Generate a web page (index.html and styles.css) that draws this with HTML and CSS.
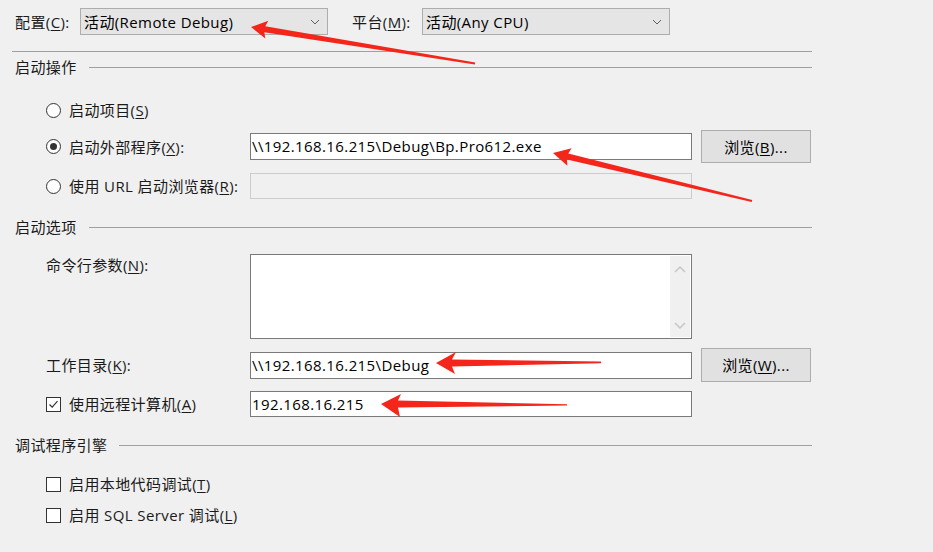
FILE: index.html
```html
<!DOCTYPE html>
<html lang="zh-CN">
<head>
<meta charset="utf-8">
<title>调试</title>
<link rel="stylesheet" href="styles.css">
</head>
<body>
<div class="page">
  <div class="toprow">
    <span class="toplab">配置(<u>C</u>):</span>
    <div class="combo"><span>活动(Remote Debug)</span><svg class="chev" width="10" height="6" viewBox="0 0 10 6"><path d="M1 1 L5 5 L9 1" fill="none" stroke="#606060" stroke-width="1"/></svg></div>
    <span class="toplab lab2">平台(<u>M</u>):</span>
    <div class="combo"><span>活动(Any CPU)</span><svg class="chev" width="10" height="6" viewBox="0 0 10 6"><path d="M1 1 L5 5 L9 1" fill="none" stroke="#606060" stroke-width="1"/></svg></div>
  </div>
  <div class="sep"></div>

  <div class="ghead g1"><span>启动操作</span><i class="gline"></i></div>

  <div class="row r-radio1">
    <span class="radio"></span><span class="optlab">启动项目(<u>S</u>)</span>
  </div>
  <div class="row r-radio2">
    <span class="radio on"></span><span class="optlab w-rad">启动外部程序(<u>X</u>):</span>
    <div class="field">\\192.168.16.215\Debug\Bp.Pro612.exe</div>
    <div class="btn">浏览(<u>B</u>)...</div>
  </div>
  <div class="row r-radio3">
    <span class="radio"></span><span class="optlab w-rad">使用 URL 启动浏览器(<u>R</u>):</span>
    <div class="field disabled"></div>
  </div>

  <div class="ghead g2"><span>启动选项</span><i class="gline"></i></div>

  <div class="row r-args">
    <span class="plainlab">命令行参数(<u>N</u>):</span>
    <div class="area">
      <div class="scroll">
        <svg width="12" height="8" viewBox="0 0 12 8"><path d="M1 7 L6 2 L11 7" fill="none" stroke="#c6c6c6" stroke-width="1.5"/></svg>
        <svg width="12" height="8" viewBox="0 0 12 8"><path d="M1 1 L6 6 L11 1" fill="none" stroke="#c6c6c6" stroke-width="1.5"/></svg>
      </div>
    </div>
  </div>
  <div class="row r-work">
    <span class="plainlab">工作目录(<u>K</u>):</span>
    <div class="field">\\192.168.16.215\Debug</div>
    <div class="btn">浏览(<u>W</u>)...</div>
  </div>
  <div class="row r-remote">
    <span class="check on"><svg width="13" height="13" viewBox="0 0 13 13"><path d="M2.5 6.5 L5.2 9.2 L10.5 3.2" fill="none" stroke="#333" stroke-width="1.2"/></svg></span><span class="optlab w-rad">使用远程计算机(<u>A</u>)</span>
    <div class="field">192.168.16.215</div>
  </div>

  <div class="ghead g3"><span>调试程序引擎</span><i class="gline"></i></div>

  <div class="row r-chk1">
    <span class="check"></span><span class="optlab">启用本地代码调试(<u>T</u>)</span>
  </div>
  <div class="row r-chk2">
    <span class="check"></span><span class="optlab">启用 SQL Server 调试(<u>L</u>)</span>
  </div>
</div>

<svg class="arrows" width="933" height="552" viewBox="0 0 933 552">
  <polygon points="251,27 268.3,20.7 265.3,26.3 475.2,62.5 474.8,64.5 264.3,32.3 265.3,38.5"/>
  <polygon points="553,153 571.6,148.2 568.3,153.6 752.2,200 751.8,202 566.9,159.4 567.4,165.7"/>
  <polygon points="436,363 456,352 452,359.5 601,361.5 601,363.2 452,366.5 455,374"/>
  <polygon points="381,404 401,394 398,400.5 567,404.2 567,405.6 398,407.5 400,417"/>
</svg>
</body>
</html>
```
FILE: styles.css
```css
html, body {
  margin: 0;
  padding: 0;
  background: #f0f0f0;
}
body {
  font-family: "Open Sans", "Noto Sans CJK SC", sans-serif;
  font-size: 15px;
  letter-spacing: 0.4px;
  color: #1a1a1a;
  width: 933px;
  height: 552px;
  overflow: hidden;
  position: relative;
}
u { text-decoration: underline; text-underline-offset: 2px; }

.page {
  padding: 8px 0 0 12px;
  width: 800px;
}

.toprow {
  display: flex;
  align-items: center;
  height: 27px;
}
.toplab {
  width: 65px;
  padding-left: 3px;
  line-height: 20px;
  white-space: nowrap;
}
.lab2 {
  margin-left: 24px;
  padding-left: 0;
  width: 70px;
}
.combo {
  box-sizing: border-box;
  width: 248px;
  height: 27px;
  background: #e5e5e5;
  border: 1px solid #adadad;
  display: flex;
  align-items: center;
  justify-content: space-between;
  padding: 0 7px 0 3px;
  line-height: 20px;
  color: #000;
}
.chev { display: block; }

.sep {
  margin-top: 16px;
  height: 1px;
  background: #a0a0a0;
}

.ghead {
  display: flex;
  align-items: center;
  height: 20px;
  line-height: 20px;
}
.ghead span { padding-left: 3px; }
.gline {
  flex: 1;
  height: 1px;
  background: #a0a0a0;
  margin-left: 12px;
}
.g1 { margin-top: 5px; }
.g2 { margin-top: 18px; }
.g3 { margin-top: 18px; }

.row {
  display: flex;
  align-items: center;
  padding-left: 34px;
  line-height: 20px;
  white-space: nowrap;
}
.r-radio1 { margin-top: 20px; height: 26px; }
.r-radio2 { margin-top: 7px; height: 33px; }
.r-radio3 { margin-top: 10px; height: 26px; }
.r-args { margin-top: 17px; height: 85px; align-items: flex-start; }
.r-work { margin-top: 9px; height: 34px; }
.r-remote { margin-top: 9px; height: 26px; }
.r-chk1 { margin-top: 16px; height: 26px; }
.r-chk2 { margin-top: 5px; height: 26px; }

.radio {
  box-sizing: border-box;
  width: 15px;
  height: 15px;
  border: 1px solid #333;
  border-radius: 50%;
  background: #fff;
  display: flex;
  align-items: center;
  justify-content: center;
  flex: none;
}
.radio.on::after {
  content: "";
  width: 7px;
  height: 7px;
  border-radius: 50%;
  background: #333;
}
.check {
  box-sizing: border-box;
  width: 15px;
  height: 15px;
  border: 1px solid #333;
  background: #fff;
  flex: none;
  display: flex;
  align-items: center;
  justify-content: center;
}
.check svg { display: block; }

.optlab { margin-left: 8px; }
.w-rad { width: 181px; }
.plainlab { width: 204px; }
.r-args .plainlab { padding-top: 1px; }

.field {
  box-sizing: border-box;
  width: 442px;
  height: 27px;
  background: #fff;
  border: 1px solid #7a7a7a;
  padding-left: 1px;
  line-height: 24px;
  color: #000;
  white-space: nowrap;
  overflow: hidden;
}
.r-radio3 .field { height: 26px; }
.r-remote .field { height: 26px; }
.field.disabled {
  background: #f0f0f0;
  border-color: #cccccc;
}

.btn {
  box-sizing: border-box;
  margin-left: 9px;
  width: 110px;
  height: 33px;
  background: #e1e1e1;
  border: 1px solid #adadad;
  display: flex;
  align-items: center;
  justify-content: center;
  color: #000;
}
.r-work .btn { height: 34px; }

.area {
  box-sizing: border-box;
  width: 442px;
  height: 85px;
  background: #fff;
  border: 1px solid #7a7a7a;
  display: flex;
  justify-content: flex-end;
  padding: 1px;
}
.scroll {
  width: 20px;
  background: #f0f0f0;
  display: flex;
  flex-direction: column;
  justify-content: space-between;
  align-items: center;
  padding: 9px 0 7px;
}
.scroll svg { display: block; }

.arrows {
  position: absolute;
  left: 0;
  top: 0;
  pointer-events: none;
}
.arrows polygon {
  fill: #f4261b;
}
```
